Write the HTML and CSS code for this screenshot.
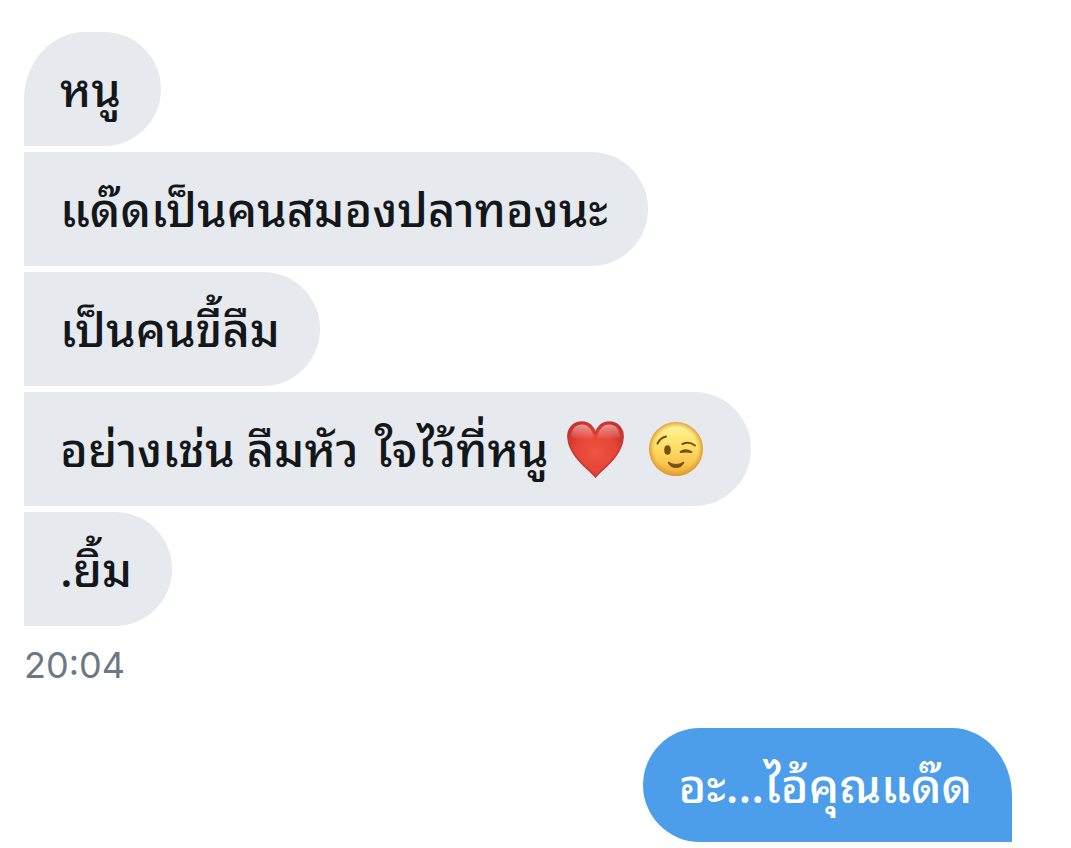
FILE: index.html
```html
<!DOCTYPE html>
<html lang="th">
<head>
  <meta charset="utf-8">
  <meta name="viewport" content="width=device-width, initial-scale=1">
  <title>Messages</title>
  <link rel="stylesheet" href="styles.css">
</head>
<body>
  <main class="chat">
    <div class="bubble received first">หนู</div>
    <div class="bubble received">แด๊ดเป็นคนสมองปลาทองนะ</div>
    <div class="bubble received">เป็นคนขี้ลืม</div>
    <div class="bubble received">อย่างเช่น ลืมหัว<span class="word">ใจไว้ที่หนู</span>
      <svg class="emoji" viewBox="0 0 57 57" role="img" aria-label="heart">
        <defs>
          <radialGradient id="heartFill" cx="0.5" cy="0.55" r="0.6">
            <stop offset="0" stop-color="#ee5543"/>
            <stop offset="0.6" stop-color="#e64436"/>
            <stop offset="1" stop-color="#c92f2b"/>
          </radialGradient>
          <linearGradient id="heartShine" x1="0" y1="0" x2="0" y2="1">
            <stop offset="0" stop-color="#fff" stop-opacity="0.5"/>
            <stop offset="1" stop-color="#fff" stop-opacity="0"/>
          </linearGradient>
        </defs>
        <path d="M28.500 56C23 49 2 35 1 17C0 8 6 1 15 1C22 1 27 6 28.500 13C30 6 35 1 42 1C51 1 57 8 56 17C55 35 34 49 28.500 56Z" fill="url(#heartFill)" stroke="#c53634" stroke-width="1.500"/>
        <path d="M4 16C4 8 9 3.500 15 3.500C21 3.500 25 8 27 17Q15 21 4 16Z" fill="url(#heartShine)"/>
        <path d="M53 16C53 8 48 3.500 42 3.500C36 3.500 32 8 30 17Q42 21 53 16Z" fill="url(#heartShine)"/>
      </svg>
      <svg class="emoji" viewBox="0 0 57 57" role="img" aria-label="winking face">
        <defs>
          <linearGradient id="faceFill" x1="0" y1="0" x2="0" y2="1">
            <stop offset="0" stop-color="#fff6a0"/>
            <stop offset="0.4" stop-color="#fee26c"/>
            <stop offset="0.75" stop-color="#fbc851"/>
            <stop offset="1" stop-color="#efa838"/>
          </linearGradient>
          <radialGradient id="faceEdge">
            <stop offset="0.8" stop-color="#e09a30" stop-opacity="0"/>
            <stop offset="1" stop-color="#d9922f" stop-opacity="0.85"/>
          </radialGradient>
        </defs>
        <circle cx="28" cy="28" r="27" fill="url(#faceFill)"/>
        <circle cx="28" cy="28" r="27" fill="url(#faceEdge)"/>
        <ellipse cx="19.500" cy="29" rx="3.300" ry="4.800" fill="#75500f"/>
        <path d="M9.500 22.500Q12 17 18 15.500M34.500 23Q41 20 47 24.500" fill="none" stroke="#75500f" stroke-width="2" stroke-linecap="round"/>
        <path d="M32.500 31Q37 27.500 43.500 31Q38 30 32.500 31Z" fill="#75500f" stroke="#75500f" stroke-width="1.800" stroke-linejoin="round"/>
        <path d="M20 41Q28 46 36 41Q34 46.500 28 46.500Q22 46.500 20 41Z" fill="#75500f" stroke="#75500f" stroke-linejoin="round"/>
      </svg>
    </div>
    <div class="bubble received">.ยิ้ม</div>
    <time class="time" datetime="20:04">20:04</time>
    <div class="bubble sent">อะ...ไอ้คุณแด๊ด</div>
  </main>
</body>
</html>
```
FILE: styles.css
```css
body {
  margin: 0;
  background: #fff;
  font-family: "Noto Sans Thai Looped", Thonburi, "Noto Sans", sans-serif;
}

.chat {
  display: flex;
  flex-direction: column;
  align-items: flex-start;
  gap: 6px;
  padding: 32px 59px 6px 24px;
}

.bubble {
  padding: 17px 40px 23px 36px;
  font-size: 47px;
  font-weight: 500;
  line-height: 74px;
}

.received {
  background: #e6eaef;
  color: #14171a;
  border-radius: 0 57px 57px 0;
}

.first {
  border-radius: 60px 57px 57px 0 / 68px 57px 57px 0;
}

.word {
  margin-left: 16px;
}

.emoji {
  width: 57px;
  height: 57px;
  margin: 0 6px;
  vertical-align: -11px;
}

.time {
  font-family: Inter, sans-serif;
  font-size: 36px;
  line-height: 66px;
  color: #6b7885;
}

.sent {
  align-self: flex-end;
  margin-top: 24px;
  background: #4c9eeb;
  color: #fff;
  border-radius: 57px 60px 0 57px / 57px 68px 0 57px;
}
```
